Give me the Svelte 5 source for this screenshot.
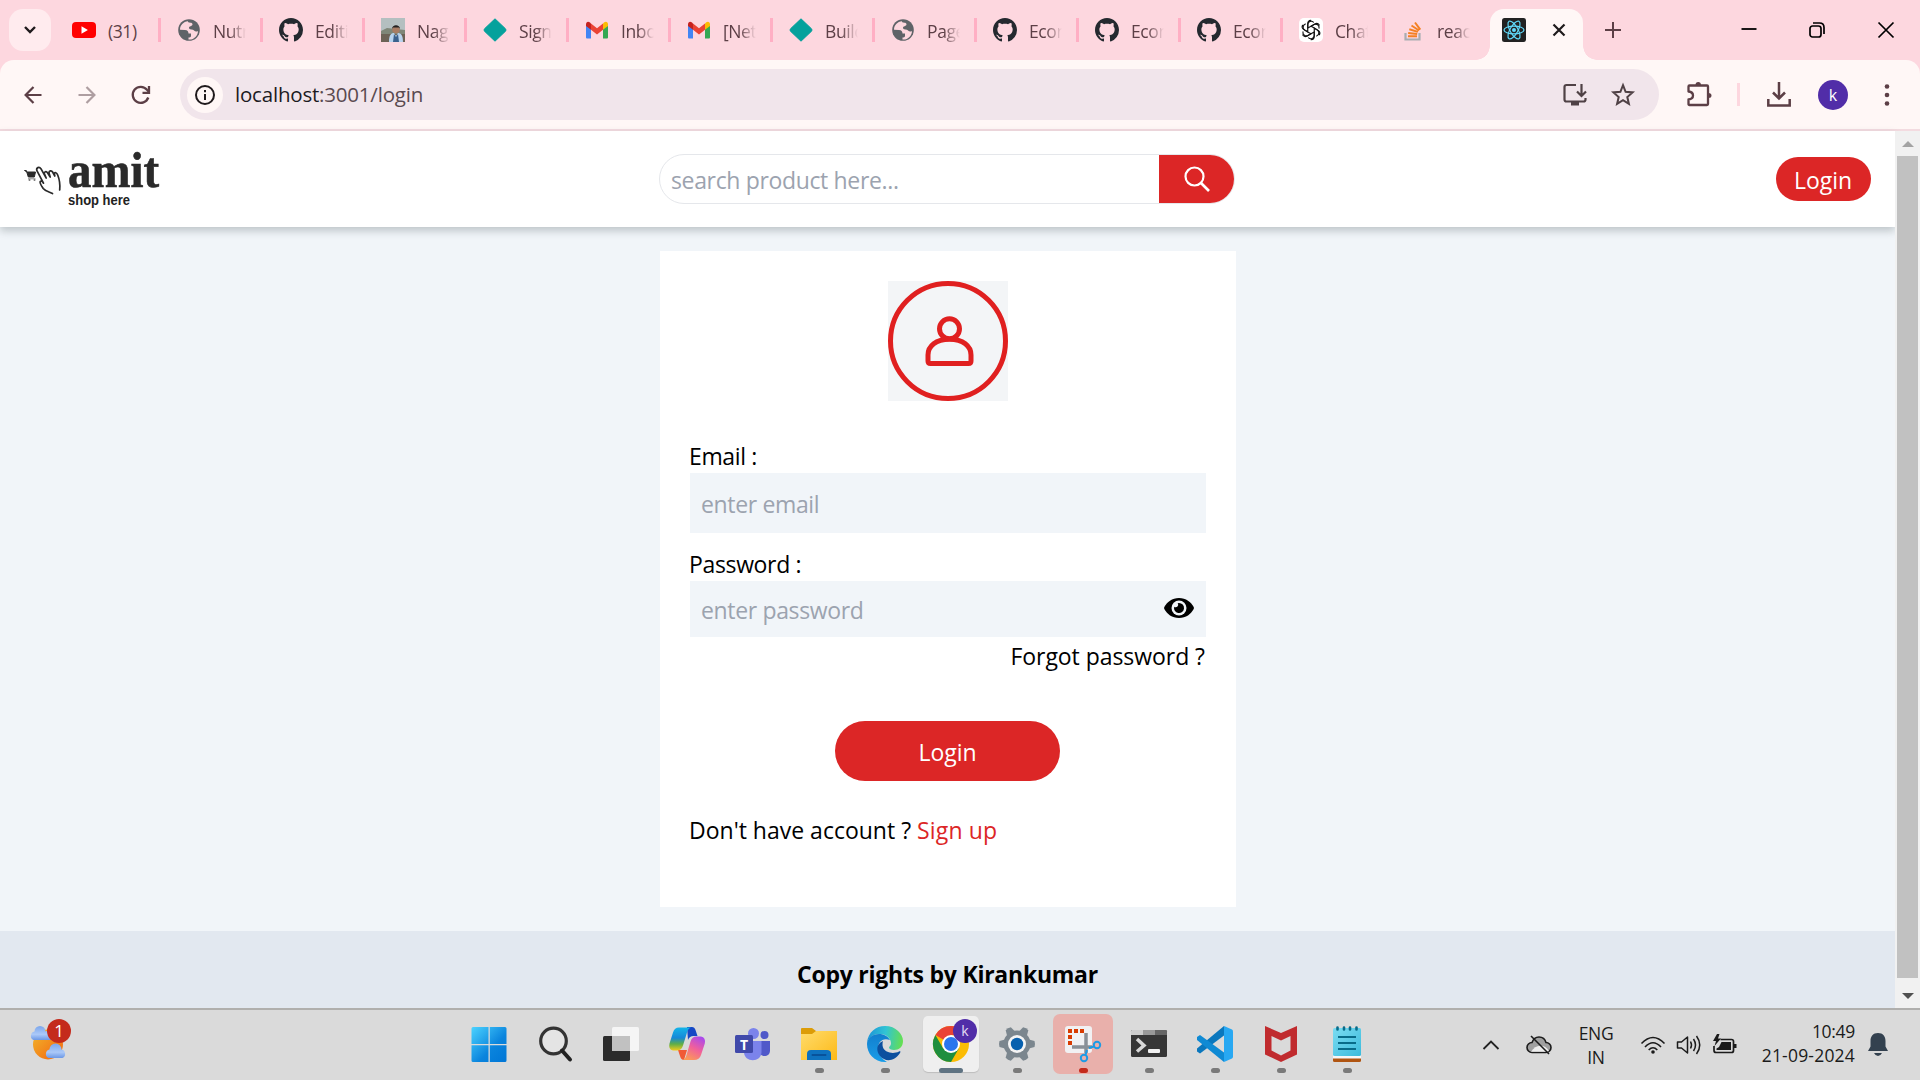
<script>
  const tabs = [
    { icon: 'youtube', label: '(31)' },
    { icon: 'globe', label: 'Nutr' },
    { icon: 'github', label: 'Editi' },
    { icon: 'photo', label: 'Nag' },
    { icon: 'diamond', label: 'Sign' },
    { icon: 'gmail', label: 'Inbo' },
    { icon: 'gmail', label: '[Net' },
    { icon: 'diamond', label: 'Builc' },
    { icon: 'globe', label: 'Page' },
    { icon: 'github', label: 'Econ' },
    { icon: 'github', label: 'Econ' },
    { icon: 'github', label: 'Econ' },
    { icon: 'openai', label: 'Chat' },
    { icon: 'stack', label: 'reac' },
  ];
  const apps = [
    { icon: 'windows' },
    { icon: 'search' },
    { icon: 'taskview' },
    { icon: 'copilot' },
    { icon: 'teams' },
    { icon: 'folder', run: true },
    { icon: 'edge', run: true },
    { icon: 'chrome', run: true, state: 'active' },
    { icon: 'gear', run: true },
    { icon: 'snip', run: true, state: 'alert' },
    { icon: 'terminal', run: true },
    { icon: 'vscode', run: true },
    { icon: 'mcafee', run: true },
    { icon: 'notepad', run: true },
  ];
  const sixths = [0, 60, 120, 180, 240, 300];
</script>

{#snippet favicon(name)}
  <svg class="fav" viewBox="0 0 24 24" fill="none">
    {#if name === 'youtube'}
      <rect x="0" y="4" width="24" height="16" rx="4" fill="#f00" />
      <path d="M9.5 8.3v7.4l6.4-3.7z" fill="#fff" />
    {:else if name === 'globe'}
      <circle cx="12" cy="12" r="10.8" fill="#5f6368" />
      <path d="M11 3.2c-4.600.4-8 4-8 8.500l5 .3c2.500.2 3.500 1.500 3.500 3.500h2.500v2.500c0 1.500-1.500 1.500-2.500 1.500v2c5 .7 9.500-3.500 9.500-8.500-1.500 1-3 .6-4-.5-1-1.500-5-.5-5-2.500 0-2.200 3-1.500 3.500-3.500.2-1.300-1-1.800-2-1.800-2.500 0-2.500-1-2.500-1.500z" fill="#fdd7df" />
    {:else if name === 'github'}
      <path fill="#24292f" transform="scale(1.5)" d="M8 0C3.580 0 0 3.580 0 8c0 3.540 2.290 6.530 5.470 7.590.4.07.55-.17.55-.38 0-.19-.01-.82-.01-1.490-2.010.37-2.530-.49-2.690-.94-.09-.23-.48-.94-.82-1.130-.28-.15-.68-.52-.01-.53.63-.01 1.080.58 1.230.82.72 1.210 1.870.87 2.330.66.07-.52.28-.87.51-1.070-1.780-.2-3.640-.89-3.640-3.950 0-.87.31-1.590.82-2.150-.08-.2-.36-1.020.08-2.120 0 0 .67-.21 2.200.82.64-.18 1.320-.27 2-.27s1.360.09 2 .27c1.530-1.040 2.200-.82 2.200-.82.44 1.100.16 1.920.08 2.120.51.56.82 1.270.82 2.150 0 3.070-1.870 3.750-3.650 3.950.29.25.54.73.54 1.480 0 1.070-.01 1.930-.01 2.200 0 .21.15.46.55.38A8.010 8.010 0 0 0 16 8c0-4.420-3.580-8-8-8z" />
    {:else if name === 'photo'}
      <rect width="24" height="24" fill="#b4bfc0" />
      <path d="M0 13l6-3 18 2v6H0z" fill="#7f8678" />
      <path d="M0 16h24v8H0z" fill="#6d6256" />
      <circle cx="15" cy="11.500" r="3.800" fill="#a97d64" />
      <path d="M11 11c0-5 8-5 8 0l-1-1.500h-6z" fill="#222" />
      <path d="M8 24c0-7 2-9 5-9l2 3 2-3c4 0 5 4 5 9z" fill="#b9d3ee" />
      <path d="M13 16l2 3 2-3 1 8h-6z" fill="#3c618d" />
    {:else if name === 'diamond'}
      <path d="M12 .8l10.500 10q1 1.200 0 2.400L12 23.200 1.500 13.200q-1-1.200 0-2.400z" fill="#05a19c" stroke="#05a19c" stroke-linejoin="round" />
    {:else if name === 'gmail'}
      <path d="M1 6v13.500q0 1 1 1h4V10z" fill="#4285f4" />
      <path d="M23 6v13.500q0 1-1 1h-4V10z" fill="#34a853" />
      <path d="M6 5.500l6 4.800 6-4.800v6.300l-6 4.700-6-4.700z" fill="#ea4335" />
      <path d="M1 6.500C1 3.500 3.500 3.300 5 4.600l1 .9v6.300L1 8z" fill="#c5221f" />
      <path d="M23 6.500c0-3-2.500-3.200-4-1.900l-1 .9v6.300L23 8z" fill="#fbbc04" />
    {:else if name === 'openai'}
      <rect width="24" height="24" rx="5" fill="#fff" />
      <g stroke="#111" stroke-width="1.150" stroke-linejoin="round" stroke-linecap="round">
        {#each sixths as a}
          <path d="M8.800 10.100V6.600a3.400 3.400 0 0 1 5.600-2.500M8.800 10.100l3.200-1.900 3.900-2.200a3.400 3.400 0 0 1 4.400 1" transform="rotate({a} 12 12)" />
        {/each}
      </g>
    {:else if name === 'stack'}
      <path d="M4.500 15v6.500h14V15" stroke="#a9adb2" stroke-width="2.200" />
      <path d="M7 18.300h9M7.200 15l9 1M8.300 11.200l8.600 2.700M10.500 7.500l7.500 5M14 4.500l5.300 7.200" stroke="#f48024" stroke-width="2" />
    {:else}
      <rect width="24" height="24" rx="2.500" fill="#222" />
      <circle cx="12" cy="12" r="2" fill="#61dafb" />
      <g stroke="#61dafb" stroke-width="1.200">
        <ellipse cx="12" cy="12" rx="10" ry="3.900" />
        <ellipse cx="12" cy="12" rx="10" ry="3.900" transform="rotate(60 12 12)" />
        <ellipse cx="12" cy="12" rx="10" ry="3.900" transform="rotate(120 12 12)" />
      </g>
    {/if}
  </svg>
{/snippet}

{#snippet appIcon(name)}
  <svg class="app-icon" viewBox="0 0 36 36" fill="none">
    {#if name === 'windows'}
      <defs><linearGradient id="win" x1="0" y1="0" x2="1" y2="1"><stop stop-color="#4cd3ff" /><stop offset=".6" stop-color="#0a84dd" /><stop offset="1" stop-color="#0076d6" /></linearGradient></defs>
      <path d="M2 1h15.500v17H.5V2.500Q.5 1 2 1zM18.800 1H34q1.500 0 1.500 1.500V18H18.800zM.5 19.300h17V36H2q-1.500 0-1.500-1.500zM18.800 19.300h16.700v15.200Q35.500 36 34 36H18.800z" fill="url(#win)" />
    {:else if name === 'search'}
      <circle cx="16.500" cy="15" r="12.800" stroke="#333" stroke-width="3.200" fill="#e4e4e4" />
      <path d="M25 24.500l8 9" stroke="#222" stroke-width="4" stroke-linecap="round" />
    {:else if name === 'taskview'}
      <rect x="0" y="10" width="27" height="25" rx="1.500" fill="#2b2b2b" />
      <rect x="9" y="1" width="27" height="24" rx="1.500" fill="#f5f5f5" />
      <rect x="9" y="10" width="18" height="15" fill="#c1c1c1" />
    {:else if name === 'copilot'}
      <defs>
        <linearGradient id="cpa" x1="0" y1="0" x2="0" y2="1"><stop stop-color="#14b4e8" /><stop offset=".45" stop-color="#1688d8" /><stop offset=".72" stop-color="#5fae47" /><stop offset="1" stop-color="#f2cb1d" /></linearGradient>
        <linearGradient id="cpb" x1=".8" y1="0" x2=".3" y2="1"><stop stop-color="#a849ee" /><stop offset=".5" stop-color="#f0609c" /><stop offset="1" stop-color="#fb9a57" /></linearGradient>
      </defs>
      <path d="M18 1h5q2.500 0 3.500 3l2 6h-4q-4 0-5.500 4z" fill="#1648c5" />
      <path d="M9 24h9l-3 10q-3 0-4-4z" fill="#f15a36" />
      <path d="M10 1.500h12q-3 1-4 5l-4 13q-1.500 5-6 5H4q-5-1-3.500-7L4 6.500q1.500-5 6-5z" fill="url(#cpa)" />
      <path d="M25 34H13.500q3-1 4-5l4-13.500q1.500-5 6-5H32q5 1 3.800 7L32 29q-1.500 5-7 5z" fill="url(#cpb)" />
    {:else if name === 'teams'}
      <circle cx="18.500" cy="7.500" r="5.500" fill="#7b83eb" />
      <circle cx="29.500" cy="9" r="4" fill="#5059c9" />
      <path d="M25 15h10v9.500c0 6.500-8 7-10 3z" fill="#5059c9" />
      <path d="M9 15h17.500v11c0 11-17.500 11-17.500 0z" fill="#7b83eb" />
      <rect x="0" y="9" width="18" height="18" rx="1.500" fill="#4049aa" />
      <text x="9" y="23.500" text-anchor="middle" class="teams-letter">T</text>
    {:else if name === 'folder'}
      <defs><linearGradient id="fold" x1="0" y1="0" x2="1" y2="1"><stop stop-color="#ffdc6c" /><stop offset="1" stop-color="#fdb917" /></linearGradient></defs>
      <path d="M0 3q0-1 1-1h10l4 3h20q1 0 1 1v6H0z" fill="#dc9c07" />
      <path d="M0 8h11l4-3h21v29H0z" fill="url(#fold)" />
      <path d="M6 34v-6q0-4 4-4h16q4 0 4 4v6z" fill="#0e72bf" />
      <path d="M11.500 29h13" stroke="#08529a" stroke-width="2" stroke-linecap="round" />
    {:else if name === 'edge'}
      <defs>
        <linearGradient id="eda" x1="0" y1=".4" x2="1" y2=".5"><stop stop-color="#1c94d8" /><stop offset=".5" stop-color="#31c4d4" /><stop offset="1" stop-color="#65df50" /></linearGradient>
        <linearGradient id="edb" x1="0" y1="0" x2="0" y2="1"><stop stop-color="#127fce" /><stop offset="1" stop-color="#1a9de8" /></linearGradient>
      </defs>
      <path d="M0 17C1 6 9 0 18 0c11 0 18 8 18 15 0 6-4 9-9 9-3 0-5-1-5-2.500 0-1 2-1.500 2-4C24 13 20 8 12 8 6 8 1 12 0 17z" fill="url(#eda)" />
      <path d="M0 18C0 12 6 8 12 8c5 0 9 2.500 11 6-8-3-12 3-12 8 0 6 4 11 9 14C8 37 0 28 0 18z" fill="url(#edb)" />
      <path d="M16 15c-7 3-7 10-3 15 5 6 14 6 20-3 1-2 0-2-1-1.500-6 3-14 1-16-4-.8-2.500-.5-5 0-6.500z" fill="#0c509f" />
    {:else if name === 'chrome'}
      <circle cx="18" cy="18" r="18" fill="#fbbc04" />
      <path d="M18 18L2.400 9A18 18 0 0 1 33.600 9H18z" fill="#ea4335" />
      <path d="M2.400 9A18 18 0 0 0 18 36l7.800-13.500H10.200z" fill="#1e8e3e" />
      <circle cx="18" cy="18" r="9" fill="#fff" />
      <circle cx="18" cy="18" r="7" fill="#2a76ee" />
    {:else if name === 'gear'}
      <g fill="#7b868e">
        <circle cx="18" cy="18" r="13.500" />
        {#each sixths as a}
          <path d="M13 8L15 .5q3-1 6 0L23 8z" transform="rotate({a + 30} 18 18)" />
        {/each}
      </g>
      <circle cx="18" cy="18" r="9" fill="#f4f4f4" />
      <circle cx="18" cy="18" r="6.200" fill="#0760ae" />
    {:else if name === 'snip'}
      <rect x="0" y="0" width="27" height="27" rx="3" fill="#f1f1f3" />
      <path d="M5 19V5h15" stroke="#d83b01" stroke-width="4" stroke-dasharray="4 2" />
      <path d="M21 7v20M7 21h20" stroke="#8a9097" stroke-width="3.500" />
      <circle cx="32" cy="19" r="3.200" stroke="#1c9be6" stroke-width="2" />
      <circle cx="19" cy="32" r="3.200" stroke="#1c9be6" stroke-width="2" />
      <path d="M24 22l5-1.500M22 24l-1.500 5" stroke="#1c9be6" stroke-width="2" />
    {:else if name === 'terminal'}
      <rect x="0" y="4" width="36" height="27" rx="1.500" fill="#363636" />
      <path d="M1 4h11v5H0V5z" fill="#ccc" /><path d="M12 4h12v5H12z" fill="#999" /><path d="M24 4h11l1 1v4H24z" fill="#666" />
      <path d="M6 13l7 6.500-7 6" stroke="#d8d8d8" stroke-width="3.500" />
      <rect x="17" y="23" width="12" height="4" rx="1" fill="#f0f0f0" />
    {:else if name === 'vscode'}
      <path d="M27 0L0 22.500v3L3 27.500 27 9.500z" fill="#0a77bd" />
      <path d="M3 9L0 11v3l27 22v-9.500z" fill="#0f8ad4" />
      <path d="M27 0l8 3.500q1 .5 1 2v25q0 1.500-1 2L27 36z" fill="#28a8f2" />
    {:else if name === 'mcafee'}
      <path fill-rule="evenodd" d="M2 0l16 7 16-7v28.500L18 36 2 28.500zM8.500 10v14.500l9.500 5 9.500-5V10L18 14.500z" fill="#c02b2e" />
    {:else}
      <defs><linearGradient id="note" x1="0" y1="0" x2="1" y2="1"><stop stop-color="#7bdcf2" /><stop offset="1" stop-color="#3cbbdc" /></linearGradient></defs>
      <path d="M4 32h28v2.500q0 1.500-1.500 1.500h-25Q4 36 4 34.500z" fill="#b05512" />
      <path d="M4 29h28v3.500H4z" fill="#f7f7f7" />
      <rect x="4" y="2" width="28" height="28" rx="1.500" fill="url(#note)" />
      <path d="M9 11h18M9 17h18M9 23h18" stroke="#086b89" stroke-width="2" />
      <path d="M8.500 1.500v2M15 1.500v2M21 1.500v2M27.500 1.500v2" stroke="#086b89" stroke-width="2.600" stroke-linecap="round" />
    {/if}
  </svg>
{/snippet}

<div class="screen">
  <div class="tabstrip">
    <button class="tab-search" aria-label="Search tabs">
      <svg width="14" height="10" viewBox="0 0 14 10" fill="none"><path d="M2 2l5 5 5-5" stroke="#1f1a1c" stroke-width="2.400" /></svg>
    </button>
    <div class="tabs">
      {#each tabs as tab}
        <div class="tab">
          {@render favicon(tab.icon)}
          <span class="tab-label">{tab.label}</span>
        </div>
      {/each}
    </div>
    <div class="tab-active">
      {@render favicon('react')}
      <svg width="14" height="14" viewBox="0 0 14 14"><path d="M1.500 1.500l11 11m0-11l-11 11" stroke="#1f1a1c" stroke-width="2.200" /></svg>
    </div>
    <svg class="new-tab" width="16" height="16" viewBox="0 0 16 16"><path d="M8 0v16M0 8h16" stroke="#5c3f46" stroke-width="2" /></svg>
    <div class="window-controls">
      <svg width="16" height="16" viewBox="0 0 16 16"><path d="M1.500 7h15" stroke="#000" stroke-width="1.800" /></svg>
      <svg width="16" height="16" viewBox="0 0 16 16" fill="none" stroke="#000" stroke-width="1.700"><rect x="1" y="4" width="11" height="11" rx="2.500" /><path d="M4 1h6.500Q15 1 15 5.500V12" /></svg>
      <svg width="16" height="16" viewBox="0 0 16 16"><path d="M.5.5l15 15m0-15l-15 15" stroke="#000" stroke-width="1.700" /></svg>
    </div>
  </div>

  <div class="toolbar-back">
    <div class="toolbar">
      <div class="nav">
        <svg width="18" height="18" viewBox="0 0 18 18" fill="none" stroke="#5c3f46" stroke-width="2.200"><path d="M17.500 9H2M9.500 1L1.600 9l7.900 8" /></svg>
        <svg width="18" height="18" viewBox="0 0 18 18" fill="none" stroke="#ae9ea1" stroke-width="2.200"><path d="M.5 9H16M8.500 1l7.900 8-7.900 8" /></svg>
        <svg width="20" height="20" viewBox="0 0 20 20" fill="none" stroke="#5c3f46" stroke-width="2.300"><path d="M17.300 12.500A8 8 0 1 1 16 4.800l2 2.200" /><path d="M18 1v6.800h-6.500" /></svg>
      </div>
      <div class="omnibox">
        <div class="site-info">
          <svg width="22" height="22" viewBox="0 0 22 22" fill="none"><circle cx="11" cy="11" r="9" stroke="#1f1a1c" stroke-width="2" /><path d="M11 10v6M11 6v2.200" stroke="#1f1a1c" stroke-width="2" /></svg>
        </div>
        <span class="url"><span class="host">localhost</span>:3001/login</span>
        <div class="omni-actions">
          <svg width="24" height="24" viewBox="0 0 24 24" fill="none" stroke="#4f4145" stroke-width="2.200"><path d="M13 2H3.500Q1.500 2 1.500 4v12.500q0 2 2 2h17q2 0 2-2V15" /><path d="M8 20.500h8" stroke-width="4" /><path d="M18.500 1v12M14 8.500l4.500 4.500L23 8.500" /></svg>
          <svg width="24" height="24" viewBox="0 0 24 24" fill="none" stroke="#4f4145" stroke-width="2"><path d="M12 2.200l2.600 6.600 7 .6-5.300 4.600 1.600 6.900-5.900-3.700-5.900 3.700 1.600-6.900-5.300-4.600 7-.6z" /></svg>
        </div>
      </div>
      <div class="extras">
        <svg width="26" height="26" viewBox="0 0 26 26" fill="none" stroke="#5c3f46" stroke-width="2.300" stroke-linejoin="round"><path d="M4 3.500h17q1 0 1 1V22q0 1-1 1H3.500q-1 0-1-1v-4.500q4.500-.5 4.500-4T2.500 9.500v-5q0-1 1-1z" /><path d="M9.500 3q0-3 2.700-3t2.800 3zM22.500 11q3 0 3 2.500t-3 2.500z" fill="#5c3f46" stroke="none" /></svg>
        <i class="divider"></i>
        <svg width="24" height="24" viewBox="0 0 24 24" fill="none" stroke="#5c3f46" stroke-width="2.500"><path d="M12-1v16M6 9.500l6 6 6-6M1.300 16v6.500h21.400V16" /></svg>
        <span class="avatar">k</span>
        <svg width="6" height="22" viewBox="0 0 6 22" fill="#5c3f46"><circle cx="3" cy="2.500" r="2.300" /><circle cx="3" cy="11" r="2.300" /><circle cx="3" cy="19.500" r="2.300" /></svg>
      </div>
    </div>
  </div>

  <div class="viewport">
    <div class="page">
      <header>
        <svg class="logo" width="140" height="60" viewBox="0 0 140 60" fill="none">
          <path d="M.5 21.500h1.800l2 6.500h6l1.200-5H3z" fill="#2a2a2a" stroke="#2a2a2a" /><path d="M4 29.800h7.500" stroke="#888" /><circle cx="5.500" cy="31" r="1" fill="#777" /><circle cx="10.500" cy="31" r="1" fill="#777" />
          <path d="M28.500 44.500c-3-1.500-7-2-9.300-5-1.500-2.300-3.800-5.500-3-7 1-1.300 2.300.3 3.300 1.700l-6.600-12.500c-1-3 2.300-4.500 4-2l5.300 9.300-1.700-4c-.7-2.300 1.800-3.300 3-1.300l2.700 4.300-1.200-4c-.2-2.300 2.500-3 3.600-1l2.200 4-.5-2.500c.3-1.500 2.400-1 3.400 1.500 2 5 2.500 10 2 15" stroke="#2a2a2a" stroke-width="1.700" stroke-linejoin="round" stroke-linecap="round" />
          <text class="logo-name" x="44" y="37.500" textLength="91" lengthAdjust="spacingAndGlyphs">amit</text>
          <text class="logo-sub" x="44" y="56" textLength="62" lengthAdjust="spacingAndGlyphs">shop here</text>
        </svg>
        <div class="search">
          <span class="placeholder">search product here...</span>
          <button class="search-btn" aria-label="Search">
            <svg width="26" height="26" viewBox="0 0 26 26" fill="none" stroke="#fff"><circle cx="10.500" cy="10.500" r="9" stroke-width="2.200" /><path d="M17 17l8 8" stroke-width="2.600" /></svg>
          </button>
        </div>
        <button class="login-small">Login</button>
      </header>

      <main>
        <section class="card">
          <svg class="portrait" width="120" height="120" viewBox="0 0 120 120" fill="none" stroke="#e02020" stroke-width="5">
            <rect width="120" height="120" fill="#f3f5f7" stroke="none" />
            <circle cx="60" cy="60" r="57.500" />
            <circle cx="61.500" cy="47.800" r="10" />
            <path d="M40 74C40 65 48 58.300 61.500 58.300S83 65 83 74v6q0 2.500-2.500 2.500h-38Q40 82.500 40 80z" />
          </svg>
          <form>
            <span class="label">Email :</span>
            <div class="field tall"><span>enter email</span></div>
            <span class="label second">Password :</span>
            <div class="field">
              <span>enter password</span>
              <svg width="30" height="20" viewBox="0 0 30 20"><path d="M15 0C8 0 3 4 .3 9q-.5 1 0 2C3 16 8 20 15 20s12-4 14.700-9q.5-1 0-2C27 4 22 0 15 0z" /><circle cx="15" cy="10" r="7.500" fill="#f1f5f9" /><path d="M15 5a5 5 0 1 1-4.800 3.700 2.500 2.500 0 0 0 3.500-3.500Q14.400 5 15 5z" /></svg>
            </div>
            <span class="forgot">Forgot password ?</span>
            <button type="button" class="login-big">Login</button>
          </form>
          <p class="signup"><span>Don't have account ?</span> <span class="link">Sign up</span></p>
        </section>
      </main>
      <footer>Copy rights by Kirankumar</footer>
    </div>
    <div class="scrollbar">
      <i class="arrow up"></i>
      <i class="thumb"></i>
      <i class="arrow down"></i>
    </div>
  </div>

  <div class="taskbar">
    <div class="weather">
      <svg width="44" height="44" viewBox="0 0 44 44">
        <defs><linearGradient id="sun" x1="0" y1="0" x2="1" y2="1"><stop stop-color="#f1b92c" /><stop offset=".7" stop-color="#f37b18" /></linearGradient><linearGradient id="cloud" x1="0" y1="0" x2="0" y2="1"><stop stop-color="#7ba6ec" /><stop offset=".6" stop-color="#abc9f8" /><stop offset="1" stop-color="#6c98e6" /></linearGradient></defs>
        <circle cx="19" cy="21.500" r="15" fill="url(#sun)" />
        <path d="M4.500 17a4.500 4.500 0 0 1 1-8.500 5.500 5.500 0 0 1 11 0 4.500 4.500 0 0 1 5 8.500z" fill="url(#cloud)" />
        <path d="M19.500 35a4.500 4.500 0 0 1 1-8.500 6 6 0 0 1 12 0 4.500 4.500 0 0 1 1 8.500z" fill="url(#cloud)" />
      </svg>
      <span class="badge">1</span>
    </div>
    <div class="apps">
      {#each apps as app}
        <div class="app {app.state ?? ''}">
          {@render appIcon(app.icon)}
          {#if app.icon === 'chrome'}<span class="profile">k</span>{/if}
          {#if app.run}<i class="indicator"></i>{/if}
        </div>
      {/each}
    </div>
    <div class="tray">
      <svg class="chev" width="18" height="10" viewBox="0 0 18 10" fill="none"><path d="M1.500 9L9 1.500 16.500 9" stroke="#222" stroke-width="1.800" /></svg>
      <svg class="onedrive" width="26" height="20" viewBox="0 0 26 20" fill="none" stroke="#1b1b1b" stroke-width="1.600"><path d="M6 17.500a5 5 0 0 1 0-10q2-5.500 7-5.500 5.500 0 7 5.500a5 5 0 0 1 0 10z" fill="#a0a0a0" /><path d="M5 16.700q4-6 9-6 6 0 9 5.300l-2 .7z" fill="#eee" stroke="none" /><path d="M5 1l18 18" /></svg>
      <div class="lang"><span>ENG</span><span>IN</span></div>
      <svg class="wifi" width="26" height="20" viewBox="0 0 26 20" fill="none" stroke="#1b1b1b" stroke-width="1.600"><path d="M1.500 8.500q11.500-12 23 0M5 12q8-8.500 16 0M8.700 15q4.300-4.500 8.600 0" /><circle cx="13" cy="17" r="1.800" fill="#1b1b1b" stroke="none" /></svg>
      <svg class="volume" width="26" height="20" viewBox="0 0 26 20" fill="none" stroke="#1b1b1b" stroke-width="1.500"><path d="M1.500 7v6h4l6 5V2l-6 5zM14.500 6.500q2 3.500 0 7M17.500 4q4 6 0 12M20.500 1q6.500 9 0 18" stroke-linejoin="round" /></svg>
      <svg class="battery" width="26" height="20" viewBox="0 0 26 20" fill="none"><path d="M8.500 4.500h11q2 0 2 2v9q0 2-2 2H4q-2 0-2-2V11" stroke="#1b1b1b" stroke-width="1.700" /><path d="M9.500 7H19v8H4.500v-1.500L7 12zM22 9h2.500v4H22zM5-1L1 6h3l-1.500 5L9 3.500H6L7.500-1z" fill="#1b1b1b" /></svg>
      <div class="clock"><span class="time">10:49</span><span class="date">21-09-2024</span></div>
      <svg class="bell" width="20" height="24" viewBox="0 0 20 24" fill="#33414f"><path d="M10 0C5 0 2.500 3.500 2.500 8v5.500L0 18h20l-2.500-4.500V8C17.500 3.500 15 0 10 0zM6 20h8q-1.500 3-4 3t-4-3z" /></svg>
    </div>
  </div>
</div>

<style>
  :global(body) { margin: 0; overflow: hidden; }
  .screen {
    width: 1920px; height: 1080px; display: flex; flex-direction: column;
    font-family: 'Open Sans', 'Noto Sans', sans-serif; color: #000; overflow: hidden;
  }
  .screen, .screen * { box-sizing: border-box; }
  svg { display: block; flex: none; overflow: visible; }
  button { border: 0; padding: 0; font: inherit; display: flex; align-items: center; justify-content: center; }

  .tabstrip { height: 60px; flex: none; background: #fdd7df; display: flex; align-items: center; padding-left: 9px; }
  .tab-search { width: 42px; height: 42px; border-radius: 14px; background: #ffebee; }
  .tabs { display: flex; margin-left: 21px; }
  .tab { flex: none; width: 102px; height: 24px; padding-left: 16px; display: flex; align-items: center; border-right: 3px solid #ffafc4; }
  .tab:first-child { width: 89px; padding-left: 0; }
  .tab:last-child { border-right: 0; }
  .fav { width: 24px; height: 24px; }
  .tab-label {
    width: 33px; margin-left: 12px; overflow: hidden; white-space: nowrap; color: #5c3f46;
    font-size: 17.500px; line-height: 24px; padding-top: 2px; letter-spacing: -0.400px;
    mask-image: linear-gradient(90deg, #000 50%, transparent 100%);
  }
  .tab:first-child .tab-label { mask-image: none; }
  .tab-active {
    position: relative; align-self: flex-end; width: 93px; height: 51px; margin-left: 3px; padding: 0 17px 9px 12px;
    background: #fff7f6; border-radius: 14px 14px 0 0; display: flex; align-items: center; justify-content: space-between;
  }
  .tab-active::before, .tab-active::after { content: ''; position: absolute; bottom: 0; width: 14px; height: 14px; }
  .tab-active::before { left: -14px; background: radial-gradient(circle at 0 0, transparent 13.500px, #fff7f6 14px); }
  .tab-active::after { right: -14px; background: radial-gradient(circle at 100% 0, transparent 13.500px, #fff7f6 14px); }
  .new-tab { margin-left: 22px; }
  .window-controls { margin-left: auto; margin-right: 26px; display: flex; gap: 53px; }

  .toolbar-back { flex: none; height: 71px; background: #fdd7df; }
  .toolbar { height: 71px; background: #fff7f6; border-bottom: 2px solid #f3dbe0; border-radius: 14px 14px 0 0; display: flex; align-items: center; padding-left: 24px; }
  .nav { display: flex; align-items: center; gap: 35.500px; width: 156px; }
  .omnibox { width: 1479px; height: 51px; border-radius: 26px; background: #f1e5eb; display: flex; align-items: center; padding: 0 24px 0 7px; }
  .site-info { width: 36px; height: 36px; border-radius: 50%; background: #fff7f6; display: flex; align-items: center; justify-content: center; }
  .url { margin-left: 12px; margin-top: -2px; font-size: 20.500px; letter-spacing: -0.200px; color: #5a4a50; }
  .host { color: #1c1b1f; }
  .omni-actions { margin-left: auto; display: flex; gap: 24px; }
  .extras { display: flex; align-items: center; margin-left: 27px; }
  .divider { width: 3px; height: 23px; background: #fdd7df; margin: 0 27px 0 25px; }
  .avatar { width: 30px; height: 30px; border-radius: 50%; background: #512da8; color: #fff; font-size: 16px; line-height: 30px; text-align: center; margin: 0 36px 0 27px; }

  .viewport { flex: none; height: 877px; display: flex; }
  .page { width: 1895px; background: #f1f5f9; display: flex; flex-direction: column; font-size: 23px; line-height: 36px; letter-spacing: -0.100px; }
  header { height: 96px; background: #fff; box-shadow: 0 4px 8px rgba(60, 75, 80, .28); display: flex; align-items: center; padding: 0 24px; }
  .logo { margin-top: -1px; }
  .logo-name { font: 700 50px 'Liberation Serif', serif; letter-spacing: 0; fill: #2a2a2a; stroke: #2a2a2a; stroke-width: .6px; }
  .logo-sub { font: 700 14.500px 'Liberation Sans', sans-serif; letter-spacing: 0; fill: #222; }
  .search { width: 576px; height: 50px; margin-left: 495px; border: 1.500px solid #e5e7eb; border-radius: 25px; display: flex; align-items: center; overflow: hidden; }
  .placeholder { flex: 1; padding: 2px 0 0 11px; color: #9ca3af; letter-spacing: -0.350px; }
  .search-btn { width: 75px; height: 50px; background: #dc2626; }
  .login-small { width: 95px; height: 44px; margin-left: auto; border-radius: 22px; background: #dc2626; color: #fff; padding: 2px 1px 0 0; }

  main { height: 704px; display: flex; justify-content: center; align-items: center; padding-left: 1px; }
  .card { width: 576px; height: 656px; background: #fff; padding: 30px; }
  .portrait { margin: 0 auto; }
  form { padding-top: 36px; display: flex; flex-direction: column; }
  .label { height: 36px; line-height: 34px; padding-top: 2px; margin-left: -1px; letter-spacing: -0.350px; }
  .label.second { margin-top: 12px; }
  .field { height: 56px; background: #f1f5f9; display: flex; align-items: center; justify-content: space-between; padding: 0 12px 0 11px; color: #9ca3af; letter-spacing: -0.350px; }
  .field svg { fill: #000; margin-top: -2px; }
  .field.tall { height: 60px; }
  .field span { padding-top: 2px; }
  .forgot { align-self: flex-end; padding: 1px 1px 1px 0; line-height: 36px; letter-spacing: -0.050px; }
  .login-big { width: 225px; height: 60px; border-radius: 30px; background: #dc2626; color: #fff; align-self: center; margin-top: 46px; margin-right: 1px; padding-top: 2px; letter-spacing: 0; }
  .signup { margin: 31px 0 0 -1px; white-space: nowrap; letter-spacing: 0; }
  .link { color: #dc2626; letter-spacing: 0.150px; }
  footer { height: 77px; background: #e2e8f0; text-align: center; font-weight: 700; padding-top: 25px; line-height: 36px; letter-spacing: -0.250px; }

  .scrollbar { width: 25px; background: #f1f1f1; display: flex; flex-direction: column; align-items: center; }
  .thumb { width: 21px; height: 822px; background: #c1c1c1; margin-top: 9px; }
  .arrow { width: 0; height: 0; border: 6px solid transparent; }
  .up { border-bottom-color: #a3a3a3; border-top: 0; margin-top: 10px; }
  .down { border-top-color: #505050; border-bottom: 0; margin-top: 15px; }

  .taskbar { flex: 1; background: #dadada; border-top: 2px solid #b0afad; display: flex; align-items: center; }
  .weather { position: relative; width: 44px; height: 44px; margin-left: 29px; margin-top: -1px; }
  .badge { position: absolute; left: 18px; top: -4px; width: 24px; height: 24px; border-radius: 50%; background: #c42b1c; color: #fff; font-size: 17px; line-height: 24px; text-align: center; }
  .apps { display: flex; gap: 6px; margin-left: 385px; }
  .app { position: relative; width: 60px; height: 60px; margin-top: -2px; display: flex; align-items: center; justify-content: center; border-radius: 7px; }
  .apps { padding-left: 1px; }
  .app-icon { width: 36px; height: 36px; }
  .app.active { width: 56px; height: 56px; margin: 0 2px; border-radius: 5px; background: #efefef; box-shadow: 0 1px 1px #bdbdbd; }
  .app.alert { background: #e9b0ab; }
  .indicator { position: absolute; bottom: 1px; left: 26px; width: 9px; height: 5px; border-radius: 3px; background: #7a7a7a; }
  .active .indicator { left: 16px; width: 24px; bottom: -1px; background: #5f7382; }
  .alert .indicator { background: #c42b1c; }
  .profile { position: absolute; left: 30px; top: 3px; width: 24px; height: 24px; border-radius: 50%; background: #512da8; color: #e4dcf4; font-size: 14px; line-height: 24px; text-align: center; }
  .teams-letter { font: 700 14px 'Open Sans', sans-serif; fill: #fff; }

  .tray { display: flex; align-items: center; margin-left: auto; padding-right: 32px; font-size: 17.500px; line-height: 24px; color: #1b1b1b; letter-spacing: -0.300px; }
  .tray span { display: block; }
  .onedrive { margin-left: 26px; }
  .lang { width: 50px; text-align: center; margin-left: 19px; margin-right: 19px; }
  .volume { margin-left: 10px; }
  .battery { margin-left: 10px; }
  .clock { width: 100px; text-align: right; margin-left: 17px; white-space: nowrap; margin-top: -4px; }
  .date { letter-spacing: 0.200px; }
  .bell { margin-left: 13px; }
</style>
